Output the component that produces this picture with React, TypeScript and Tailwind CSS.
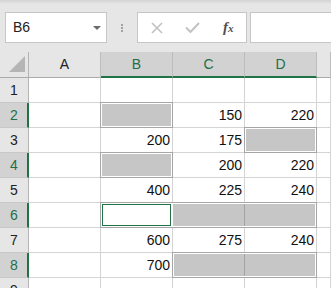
import React from "react";

const colStart = ["col-start-1", "col-start-2", "col-start-3", "col-start-4", "col-start-5", "col-start-6"];
const rowStart = [
  "row-start-1",
  "row-start-2",
  "row-start-3",
  "row-start-4",
  "row-start-5",
  "row-start-6",
  "row-start-7",
  "row-start-8",
  "row-start-9",
  "row-start-10",
];

// values for columns A..E, rows 1..9
const data: (string | null)[][] = [
  [null, null, null, null, null],
  [null, null, "150", "220", null],
  [null, "200", "175", null, null],
  [null, null, "200", "220", null],
  [null, "400", "225", "240", null],
  [null, null, null, null, null],
  [null, "600", "275", "240", null],
  [null, "700", null, null, null],
  [null, null, null, null, null],
];

const selectedRows = [2, 4, 6, 8];
const letters = ["A", "B", "C", "D", ""];
const selectedCols = ["B", "C", "D"];

function FormulaIcons() {
  return (
    <div className="flex h-[31px] w-[110px] items-center border border-[#c6c6c6] bg-white">
      <svg width="12" height="12" viewBox="0 0 12 12" className="ml-[13px]">
        <path d="M1 1 L11 11 M11 1 L1 11" stroke="#c2c2c2" strokeWidth="1.6" fill="none" />
      </svg>
      <svg width="15" height="11" viewBox="0 0 15 11" className="ml-[22px]">
        <path d="M1 5.5 L5.5 10 L14 1" stroke="#c2c2c2" strokeWidth="2" fill="none" />
      </svg>
      <span className="ml-[23px] font-['Liberation_Serif',serif] text-[15px] font-bold italic leading-none text-[#505050]">
        f<span className="text-[11px]">x</span>
      </span>
    </div>
  );
}

export default function App() {
  return (
    <div className="h-[288px] w-full overflow-hidden bg-white font-['Liberation_Sans',Arial,sans-serif] text-[14px]">
      {/* Toolbar / formula bar */}
      <div className="relative h-[52px] bg-[#e6e6e6]">
        <div className="h-[4px] bg-gradient-to-b from-[#d3d3d3] to-[#e6e6e6]" />
        <div className="flex pt-[8px]">
          <div className="ml-[5px] flex h-[31px] w-[102px] items-center justify-between border border-[#c6c6c6] bg-white pl-[7px] pr-[5px] text-[#222]">
            <span>B6</span>
            <svg width="8" height="4" viewBox="0 0 8 4">
              <path d="M0 0 L8 0 L4 4 Z" fill="#6b6b6b" />
            </svg>
          </div>
          <div className="flex w-[30px] flex-col items-center justify-center gap-[1px]">
            <div className="h-[2px] w-[2px] bg-[#a3a3a3]" />
            <div className="h-[2px] w-[2px] bg-[#a3a3a3]" />
            <div className="h-[2px] w-[2px] bg-[#a3a3a3]" />
          </div>
          <FormulaIcons />
          <div className="ml-[3px] h-[31px] flex-1 border border-r-0 border-[#c6c6c6] bg-white" />
        </div>
      </div>

      {/* Sheet grid */}
      <div className="grid grid-cols-[29px_72px_72px_72px_72px_1fr] grid-rows-[26px_repeat(9,25px)]">
        {/* corner */}
        <div className="col-start-1 row-start-1 border-r border-b border-r-[#b4b4b4] border-b-[#ababab] bg-[#e6e6e6]">
          <svg width="28" height="25" viewBox="0 0 28 25">
            <polygon points="25,4 25,20 9,20" fill="#b5b5b5" />
          </svg>
        </div>
        {letters.map((l, i) => {
          const sel = selectedCols.includes(l);
          return (
            <div
              key={"h" + i}
              className={`${colStart[i + 1]} row-start-1 flex items-center justify-center border-r border-r-[#bdbdbd] ${
                sel
                  ? "border-b-2 border-b-[#217346] bg-[#d2d2d2] pt-[1px] text-[#1f6e4a]"
                  : "border-b border-b-[#ababab] bg-[#e6e6e6] text-[#222]"
              }`}
            >
              {l}
            </div>
          );
        })}

        {data.map((row, r) => {
          const n = r + 1;
          const sel = selectedRows.includes(n);
          return (
            <React.Fragment key={"r" + n}>
              <div
                className={`col-start-1 ${rowStart[n]} flex items-center justify-center border-b border-b-[#c8c8c8] ${
                  sel
                    ? "border-r-2 border-r-[#217346] bg-[#d2d2d2] pl-[1px] text-[#1f6e4a]"
                    : "border-r border-r-[#b4b4b4] bg-[#e6e6e6] text-[#222]"
                }`}
              >
                {n}
              </div>
              {row.map((v, c) => (
                <div
                  key={"c" + n + c}
                  className={`${colStart[c + 1]} ${rowStart[n]} flex items-center justify-end border-r border-b border-[#d4d4d4] pr-[2px] text-[#111]`}
                >
                  {v}
                </div>
              ))}
            </React.Fragment>
          );
        })}

        {/* selection overlays */}
        <div className="col-start-3 row-start-3 -mt-px -ml-px flex border border-[#a6a6a6] bg-white p-px">
          <div className="flex-1 bg-[#c6c6c6]" />
        </div>
        <div className="col-start-5 row-start-4 -mt-px -ml-px flex border border-[#a6a6a6] bg-white p-px">
          <div className="flex-1 bg-[#c6c6c6]" />
        </div>
        <div className="col-start-3 row-start-5 -mt-px -ml-px flex border border-[#a6a6a6] bg-white p-px">
          <div className="flex-1 bg-[#c6c6c6]" />
        </div>
        <div className="col-start-3 col-end-6 row-start-7 -mt-px -ml-px flex border border-[#a6a6a6] bg-white p-px">
          <div className="w-[69px] border border-[#217346]" />
          <div className="w-[2px]" />
          <div className="flex flex-1 bg-[#c6c6c6]">
            <div className="w-[71px]" />
            <div className="w-px bg-[#a3a3a3]" />
          </div>
        </div>
        <div className="col-start-4 col-end-6 row-start-9 -mt-px -ml-px flex border border-[#a6a6a6] bg-white p-px">
          <div className="flex flex-1 bg-[#c6c6c6]">
            <div className="w-[70px]" />
            <div className="w-px bg-[#a3a3a3]" />
          </div>
        </div>
      </div>
    </div>
  );
}
